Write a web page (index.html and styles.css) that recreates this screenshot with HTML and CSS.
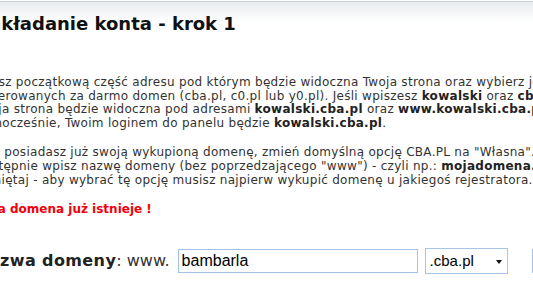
FILE: index.html
```html
<!DOCTYPE html>
<html>
  <head>
    <title>Zakładanie konta - krok 1</title>
    <link rel="stylesheet" href="styles.css">
  </head>

  <body>
    <div class="page">
      <div class="head">
        <h1>Zakładanie konta - krok 1</h1>
      </div>

      <!-- opis pierwszego kroku -->
      <p class="info first">
        Wpisz początkową część adresu pod którym będzie widoczna Twoja strona oraz wybierz jedną<br />
        z oferowanych za darmo domen (cba.pl, c0.pl lub y0.pl). Jeśli wpiszesz <b>kowalski</b> oraz <b>cba.pl</b> to<br />
        Twoja strona będzie widoczna pod adresami <b>kowalski.cba.pl</b> oraz <b>www.kowalski.cba.pl</b>.<br />
        Jednocześnie, Twoim loginem do panelu będzie <b>kowalski.cba.pl</b>.
      </p>

      <p class="info">
        Jeśli posiadasz już swoją wykupioną domenę, zmień domyślną opcję CBA.PL na "Własna".<br />
        Następnie wpisz nazwę domeny (bez poprzedzającego "www") - czyli np.: <b>mojadomena.pl</b>.<br />
        Pamiętaj - aby wybrać tę opcję musisz najpierw wykupić domenę u jakiegoś rejestratora.
      </p>

      <p class="error">Taka domena już istnieje !</p>

      <form class="domain-form" action="/krok2" method="post">
        <label for="domain"><b>Nazwa domeny</b>: www.</label>
        <input type="text" id="domain" name="domain" value="bambarla" />
        <div class="select-wrap">
          <select name="suffix">
            <option value="cba.pl">.cba.pl</option>
            <option value="c0.pl">.c0.pl</option>
            <option value="y0.pl">.y0.pl</option>
            <option value="own">Własna</option>
          </select>
        </div>
        <input type="submit" value="Dalej" />
      </form>
    </div>
  </body>
</html>
```

FILE: styles.css
```css
body {
  margin: 0;
  font-family: "DejaVu Sans", Verdana, sans-serif;
  font-size: 12px;
  color: #333;
  background: #fff;
  overflow: hidden;
}

.page {
  margin-left: -25px;
  white-space: nowrap;
}

.head {
  margin-top: 1px;
  border-top: 1px solid #c9ced3;
  background: linear-gradient(#e8ecef, #fff 20px);
  padding-top: 12px;
  height: 28px;
}

h1 {
  margin: 0 0 0 1px;
  font-size: 18px;
  line-height: 20px;
  color: #111;
}

.info {
  margin: 0 0 16px 0;
  line-height: 13.6px;
  letter-spacing: 0.28px;
}

.info.first {
  margin-top: 34px;
}

.info b {
  color: #222;
}

.error {
  margin: 0;
  line-height: 13.6px;
  color: #f0000a;
  font-weight: bold;
}

.domain-form {
  display: flex;
  align-items: center;
  margin-top: 31px;
  height: 26px;
}

.domain-form > * {
  flex-shrink: 0;
}

label {
  font-size: 16px;
  color: #333;
  margin-right: 8px;
}

label b {
  color: #222;
  letter-spacing: 0.4px;
}

input[type="text"] {
  width: 240px;
  height: 24px;
  box-sizing: border-box;
  border: 1px solid #a3c1e6;
  padding: 0 3px;
  font-family: "Liberation Sans", Arial, sans-serif;
  font-size: 16px;
  color: #000;
  margin-right: 7px;
}

.select-wrap {
  position: relative;
  margin-right: 24px;
}

.select-wrap::after {
  content: "";
  position: absolute;
  right: 6px;
  top: 12px;
  border-left: 3px solid transparent;
  border-right: 3px solid transparent;
  border-top: 4px solid #111;
}

select {
  -webkit-appearance: none;
  appearance: none;
  width: 83px;
  height: 26px;
  border: 1px solid #a8c5e8;
  border-radius: 0;
  background: #fff;
  padding: 0 4px;
  font-family: "Liberation Sans", Arial, sans-serif;
  font-size: 15px;
  color: #000;
}

input[type="submit"] {
  height: 24px;
  border: 1px solid #a3c1e6;
  background: #f2f6fb;
  font-size: 13px;
  padding: 0 10px;
}
```
